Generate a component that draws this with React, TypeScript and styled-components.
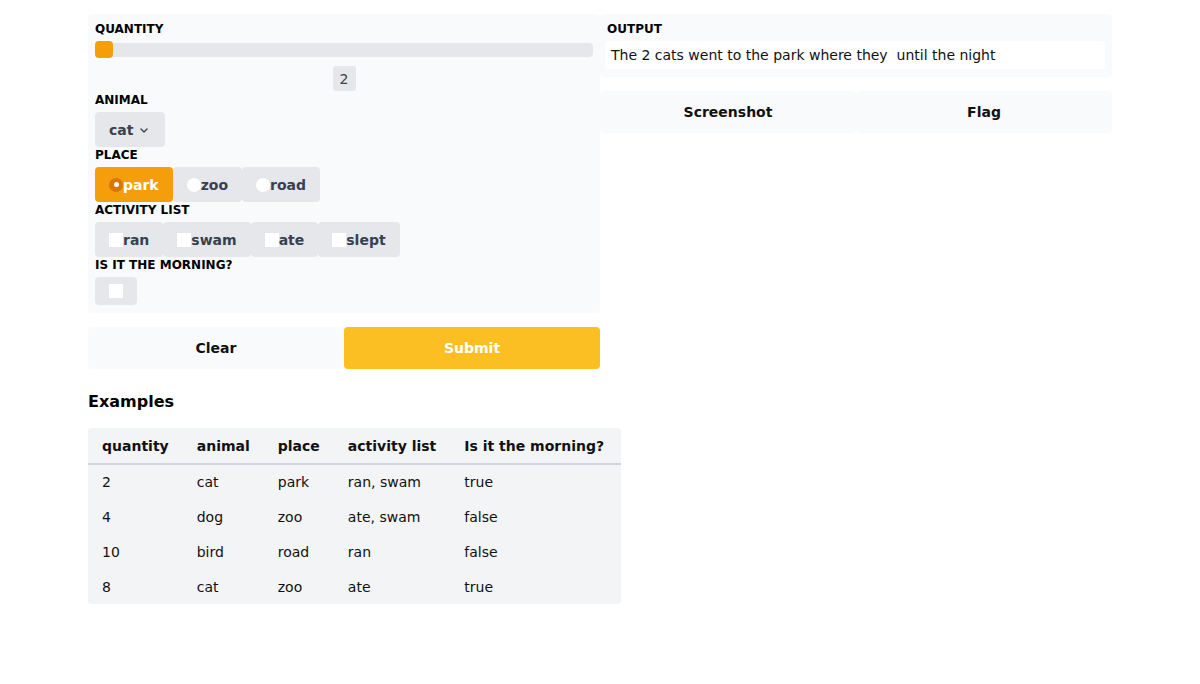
import React from "react";
import styled, { createGlobalStyle } from "styled-components";

const Global = createGlobalStyle`
  html, body { margin: 0; padding: 0; background: #ffffff; }
  body { font-family: "DejaVu Sans", "Liberation Sans", sans-serif; color: #111827; }
  * { box-sizing: border-box; }
`;

const Page = styled.div`
  width: 1024px;
  margin: 0 auto;
  padding-top: 14px;
`;

const Columns = styled.div`
  display: grid;
  grid-template-columns: 512px 512px;
`;

const Column = styled.div`
  display: flex;
  flex-direction: column;
  gap: 14px;
`;

const Panel = styled.div`
  background: #f9fafb;
  border-radius: 4px;
  padding: 8px 7px 8px 7px;
  display: flex;
  flex-direction: column;
  gap: 1px;
`;

const OutPanel = styled.div`
  background: #f9fafb;
  border-radius: 4px;
  padding: 8px 7px 7px 5px;
  display: flex;
  flex-direction: column;
  height: 63px;
`;

const Label = styled.div<{ $indent?: number }>`
  font-size: 12px;
  font-weight: 700;
  line-height: 14px;
  text-transform: uppercase;
  color: #000;
  margin-bottom: 5px;
  margin-left: ${(p) => p.$indent ?? 0}px;
`;

const Block = styled.div`
  display: flex;
  flex-direction: column;
  align-items: flex-start;
`;

const SliderWrap = styled.div`
  position: relative;
  width: 100%;
  height: 17px;
  display: flex;
  align-items: center;
`;

const Track = styled.div`
  width: 100%;
  height: 14px;
  background: #e5e7eb;
  border-radius: 4px;
`;

const Thumb = styled.div`
  position: absolute;
  left: 0;
  top: 0;
  width: 18px;
  height: 17px;
  background: #f59e0b;
  border-radius: 4px;
`;

const NumberRow = styled.div`
  width: 100%;
  display: flex;
  justify-content: center;
  padding: 8px 0 1px 0;
`;

const NumberBox = styled.div`
  width: 23px;
  height: 25px;
  background: #e5e7eb;
  border-radius: 3px;
  color: #374151;
  font-size: 14px;
  display: flex;
  align-items: center;
  justify-content: center;
`;

const Select = styled.div`
  height: 35px;
  width: 70px;
  background: #e5e7eb;
  border-radius: 4px;
  padding-left: 14px;
  display: flex;
  align-items: center;
  gap: 5px;
  color: #374151;
  font-size: 14px;
  font-weight: 700;
`;

const Options = styled.div`
  display: flex;
`;

const Option = styled.div<{ $checked?: boolean }>`
  height: 35px;
  padding: 0 14px;
  display: flex;
  align-items: center;
  background: ${(p) => (p.$checked ? "#f59e0b" : "#e5e7eb")};
  color: ${(p) => (p.$checked ? "#ffffff" : "#374151")};
  border-radius: 4px;
  font-size: 14px;
  font-weight: 700;
`;

const Radio = styled.span<{ $checked?: boolean }>`
  width: 14px;
  height: 14px;
  border-radius: 50%;
  background: ${(p) => (p.$checked ? "#d97706" : "#ffffff")};
  display: flex;
  align-items: center;
  justify-content: center;
  &::after {
    content: "";
    display: ${(p) => (p.$checked ? "block" : "none")};
    width: 5px;
    height: 5px;
    border-radius: 50%;
    background: #ffffff;
  }
`;

const Box = styled.span`
  width: 14px;
  height: 14px;
  background: #ffffff;
  display: block;
`;

const SingleCheck = styled.div`
  width: 42px;
  height: 28px;
  background: #e5e7eb;
  border-radius: 4px;
  padding-left: 14px;
  display: flex;
  align-items: center;
`;

const ButtonRow = styled.div`
  display: grid;
  grid-template-columns: 1fr 1fr;
  height: 42px;
`;

const Button = styled.button<{ $primary?: boolean }>`
  border: none;
  margin: 0;
  font-family: inherit;
  font-size: 14px;
  font-weight: 700;
  background: ${(p) => (p.$primary ? "#fbbf24" : "#f9fafb")};
  color: ${(p) => (p.$primary ? "#ffffff" : "#111111")};
  border-radius: 4px;
  cursor: pointer;
`;

const OutputBox = styled.div`
  height: 28px;
  background: #ffffff;
  border-radius: 4px;
  padding: 0 6px;
  display: flex;
  align-items: center;
  font-size: 14px;
  color: #111111;
  white-space: pre;
`;

const Examples = styled.div`
  margin-top: 24px;
`;

const Heading = styled.h2`
  margin: 0 0 17px 0;
  font-size: 16px;
  font-weight: 700;
  line-height: 18px;
  color: #000;
`;

const Table = styled.table`
  border-collapse: collapse;
  background: #f3f4f6;
  border-radius: 4px;
  overflow: hidden;
  font-size: 14px;
  color: #111111;
`;

const Th = styled.th`
  text-align: left;
  font-weight: 700;
  padding: 0 14px;
  height: 36px;
  border-bottom: 2px solid #d1d5db;
  white-space: nowrap;
  &:last-child { padding-right: 17px; }
`;

const Td = styled.td`
  padding: 0 14px;
  height: 35px;
  white-space: nowrap;
`;

const Chevron = () => (
  <svg width="12" height="12" viewBox="0 0 12 12" fill="none">
    <path d="M3 5 L6 8 L9 5" stroke="#374151" strokeWidth="1.4" strokeLinecap="round" strokeLinejoin="round" />
  </svg>
);

const places = ["park", "zoo", "road"];
const activities = ["ran", "swam", "ate", "slept"];
const rows = [
  ["2", "cat", "park", "ran, swam", "true"],
  ["4", "dog", "zoo", "ate, swam", "false"],
  ["10", "bird", "road", "ran", "false"],
  ["8", "cat", "zoo", "ate", "true"],
];

export default function App() {
  return (
    <>
      <Global />
      <Page>
        <Columns>
          <Column>
            <Panel>
              <Block>
                <Label>Quantity</Label>
                <SliderWrap>
                  <Track />
                  <Thumb />
                </SliderWrap>
                <NumberRow>
                  <NumberBox>2</NumberBox>
                </NumberRow>
              </Block>
              <Block>
                <Label>Animal</Label>
                <Select>
                  cat <Chevron />
                </Select>
              </Block>
              <Block>
                <Label>Place</Label>
                <Options>
                  {places.map((p, i) => (
                    <Option key={p} $checked={i === 0}>
                      <Radio $checked={i === 0} />
                      {p}
                    </Option>
                  ))}
                </Options>
              </Block>
              <Block>
                <Label>Activity list</Label>
                <Options>
                  {activities.map((a) => (
                    <Option key={a}>
                      <Box />
                      {a}
                    </Option>
                  ))}
                </Options>
              </Block>
              <Block>
                <Label>Is it the morning?</Label>
                <SingleCheck>
                  <Box />
                </SingleCheck>
              </Block>
            </Panel>
            <ButtonRow>
              <Button>Clear</Button>
              <Button $primary>Submit</Button>
            </ButtonRow>
          </Column>
          <Column>
            <OutPanel>
              <Label $indent={2}>Output</Label>
              <OutputBox>{"The 2 cats went to the park where they  until the night"}</OutputBox>
            </OutPanel>
            <ButtonRow>
              <Button>Screenshot</Button>
              <Button>Flag</Button>
            </ButtonRow>
          </Column>
        </Columns>
        <Examples>
          <Heading>Examples</Heading>
          <Table>
            <thead>
              <tr>
                <Th>quantity</Th>
                <Th>animal</Th>
                <Th>place</Th>
                <Th>activity list</Th>
                <Th>Is it the morning?</Th>
              </tr>
            </thead>
            <tbody>
              {rows.map((r, i) => (
                <tr key={i}>
                  {r.map((c, j) => (
                    <Td key={j}>{c}</Td>
                  ))}
                </tr>
              ))}
            </tbody>
          </Table>
        </Examples>
      </Page>
    </>
  );
}
